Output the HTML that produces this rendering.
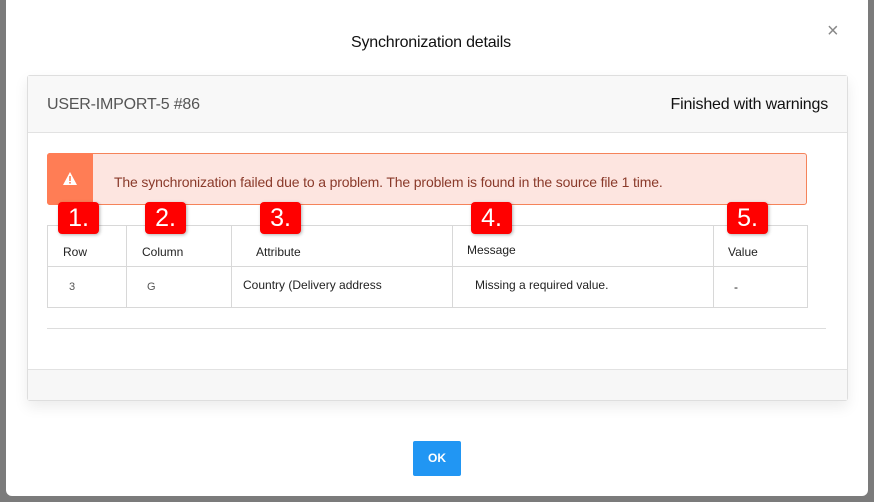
<!DOCTYPE html><html><head><style>
body{margin:0;width:874px;height:502px;background:#7b7b7b;font-family:"Liberation Sans",sans-serif;position:relative;overflow:hidden}
.m{position:absolute;left:6px;top:-6px;width:862px;height:502px;background:#fff;border-radius:6px}
.a{position:absolute}
.card{left:27px;top:75px;width:819px;height:324px;border:1px solid #dedede;border-radius:3px;box-shadow:0 6px 14px rgba(0,0,0,.08);background:#fff}
.b{position:absolute;background:#f00;color:#fff;font-size:25px;width:41px;height:32px;border-radius:4px;text-align:center;line-height:32px;box-shadow:1px 1px 3px rgba(0,0,0,.3)}
table{position:absolute;left:47px;top:225px;width:760px;table-layout:fixed;border-collapse:collapse;font-size:12px;color:#222}
td{border:1px solid #d8d8d8;padding:0;vertical-align:middle}
</style></head><body>
<div class="m"></div>
<div class="a" style="left:351px;top:34px;font-size:16px;color:#111;letter-spacing:-0.2px">Synchronization details</div>
<div class="a" style="left:827px;top:20px;font-size:20px;color:#888">×</div>
<div class="a card">
<div style="height:56px;background:#f8f8f8;border-bottom:1px solid #e2e2e2;position:relative">
<span class="a" style="left:19px;top:20px;font-size:16px;color:#555;letter-spacing:-0.2px">USER-IMPORT-5 #86</span>
<span class="a" style="right:19px;top:20px;font-size:16px;color:#111;letter-spacing:-0.2px">Finished with warnings</span></div>
<div class="a" style="left:0;right:0;bottom:0;height:30px;background:#f7f7f7;border-top:1px solid #e2e2e2"></div>
</div>
<div class="a" style="left:47px;top:153px;width:758px;height:50px;border:1px solid #f5835a;border-radius:3px;background:#fde5e0"></div>
<div class="a" style="left:47px;top:153px;width:46px;height:52px;background:#ff7d55;border-radius:3px 0 0 3px"></div>
<svg class="a" style="left:62px;top:171px" width="16" height="15" viewBox="0 0 16 15"><path d="M8 1L15 14H1Z" fill="#fff"/><rect x="7.2" y="5" width="1.6" height="5" fill="#ff7d55"/><rect x="7.2" y="11" width="1.6" height="1.6" fill="#fff" style="fill:#ff7d55"/></svg>
<div class="a" style="left:114px;top:174px;font-size:14px;color:#8a3a2a;letter-spacing:-0.15px">The synchronization failed due to a problem. The problem is found in the source file 1 time.</div>
<table>
<colgroup><col style="width:79px"><col style="width:105px"><col style="width:221px"><col style="width:261px"><col style="width:94px"></colgroup>
<tr style="height:41px"><td style="padding-left:15px;padding-top:12px">Row</td><td style="padding-left:15px;padding-top:12px">Column</td><td style="padding-left:24px;padding-top:12px">Attribute</td><td style="padding-left:14px;padding-top:8px">Message</td><td style="padding-left:14px;padding-top:12px">Value</td></tr>
<tr style="height:41px"><td style="padding-left:21px;color:#555;font-size:11px">3</td><td style="padding-left:20px;color:#555;font-size:11px">G</td><td style="padding-left:11px;padding-bottom:4px">Country (Delivery address</td><td style="padding-left:22px;padding-bottom:4px">Missing a required value.</td><td style="padding-left:20px">-</td></tr>
</table>
<div class="a" style="left:47px;top:328px;width:779px;height:1px;background:#ddd"></div>
<div class="b" style="left:58px;top:202px">1.</div>
<div class="b" style="left:145px;top:202px">2.</div>
<div class="b" style="left:260px;top:202px">3.</div>
<div class="b" style="left:471px;top:202px">4.</div>
<div class="b" style="left:727px;top:202px">5.</div>
<div class="a" style="left:413px;top:441px;width:48px;height:35px;background:#2196f3;border-radius:2px;color:#fff;font-size:12px;font-weight:bold;text-align:center;line-height:35px">OK</div>
</body></html>
